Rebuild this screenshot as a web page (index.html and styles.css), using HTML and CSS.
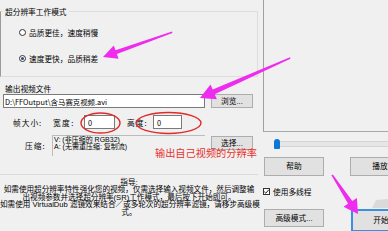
FILE: index.html
```html
<!DOCTYPE html>
<html lang="zh-CN">
<head>
<meta charset="utf-8">
<title>超分辨率</title>
<link rel="stylesheet" href="styles.css">
</head>
<body>
<div class="app">
  <div class="left">
    <div class="group">
      <div class="group-title">超分辨率工作模式</div>
      <div class="radio r1"><span class="rb"></span><span>品质更佳，速度稍慢</span></div>
      <div class="radio r2"><span class="rb on"></span><span>速度更快，品质稍差</span></div>
    </div>
    <div class="out-label">输出视频文件</div>
    <div class="file-row">
      <div class="field file">D:\FFOutput\含马赛克视频.avi</div>
      <div class="btn side">浏览...</div>
    </div>
    <div class="frame-row">
      <span class="lbl-frame">帧大小:</span>
      <span class="lbl-w">宽度:</span>
      <div class="field num w">0</div>
      <span class="lbl-h">高度:</span>
      <div class="field num h">0</div>
    </div>
    <div class="comp-row">
      <span class="lbl-comp">压缩:</span>
      <div class="comp-box">
        <div>V: (非压缩的 RGB32)</div>
        <div>A: (无需重压缩: 复制流)</div>
      </div>
      <div class="btn side pick">选择...</div>
    </div>
    <div class="guide">
      <div>指导:</div>
      <div>如需使用超分辨率特性强化您的视频，仅需选择输入视频文件，然后调整输</div>
      <div>出视频参数并选择超分辨率(SR)工作模式，最后按下开始即可。</div>
      <div>如需使用 VirtualDub 滤镜效果结合／或多轮次的超分辨率滤镜，请移步高级模</div>
      <div>式。</div>
    </div>
  </div>
  <div class="right">
    <div class="preview"></div>
    <div class="slider"><span class="thumb"></span><span class="track"></span></div>
    <div class="btn-row top">
      <div class="btn big">帮助</div>
      <div class="btn big">播放</div>
    </div>
    <div class="check">
      <span class="cb"><svg viewBox="0 0 7 7" width="7" height="7"><path d="M1.2 3.6 L2.8 5.2 L5.9 1.6" fill="none" stroke="#222" stroke-width="1"/></svg></span>
      <span>使用多线程</span>
    </div>
    <div class="btn-row bottom">
      <div class="btn big adv">高级模式...</div>
      <div class="btn big start">开始</div>
    </div>
  </div>
</div>
<svg class="marks" viewBox="0 0 388 231" width="388" height="231">
  <polygon points="372,208 376,200 388,199 388,208" fill="#dadada"/>
  <ellipse cx="100.5" cy="123" rx="19.5" ry="10" fill="none" stroke="#e02a2a" stroke-width="1.4"/>
  <ellipse cx="168.5" cy="123" rx="32.5" ry="10.5" fill="none" stroke="#e02a2a" stroke-width="1.4"/>
  <polygon points="172,31.4 115.5,50.3 113.8,45.6 103,57 118.6,58.8 116.9,54.1 172.4,33" fill="#ee2bee"/>
  <polygon points="290,57.2 212.7,89.6 210.5,84.6 200,98 216.9,99.2 214.7,94.2 290.4,58.8" fill="#ee2bee"/>
  <polygon points="331.4,175.3 348.1,203.8 343.5,206.8 358,214 356.9,198 352.3,201 332.8,174.6" fill="#ee2bee"/>
</svg>
<div class="note">输出自己视频的分辨率</div>
</body>
</html>
```
FILE: styles.css
```css
html, body {
  margin: 0;
  padding: 0;
}
body {
  width: 388px;
  height: 231px;
  overflow: hidden;
  position: relative;
  background: #f0f0f0;
  color: #000;
  font-family: "Noto Sans CJK SC", "Noto Sans", sans-serif;
  font-size: 7.7px;
  line-height: 9px;
}
.app {
  display: flex;
  height: 231px;
}
.left {
  width: 260px;
  flex: none;
  display: flex;
  flex-direction: column;
}
.group {
  margin: 11px 2px 0 0;
  height: 66px;
  box-sizing: border-box;
  border: 1px solid #dcdcdc;
  border-left-color: #9a9a9a;
  display: flex;
  flex-direction: column;
}
.group-title {
  width: max-content;
  margin: -5px 0 0 2px;
  padding: 0 2px;
  background: #f0f0f0;
  line-height: 9px;
}
.radio {
  display: flex;
  align-items: center;
  gap: 3px;
  height: 9px;
  margin-left: 18px;
}
.r1 { margin-top: 12px; }
.r2 { margin-top: 17px; }
.rb {
  width: 7px;
  height: 7px;
  box-sizing: border-box;
  border: 1px solid #333;
  border-radius: 50%;
  background: #fff;
  display: flex;
  align-items: center;
  justify-content: center;
}
.rb.on::after {
  content: "";
  width: 3px;
  height: 3px;
  border-radius: 50%;
  background: #1a4f8f;
}
.out-label {
  margin: 7px 0 0 5px;
  line-height: 9px;
}
.file-row {
  display: flex;
  margin-top: 1px;
}
.field {
  background: #fff;
  border: 1px solid #7a7a7a;
  box-sizing: border-box;
  display: flex;
  align-items: center;
  font-size: 7.4px;
  white-space: nowrap;
  overflow: hidden;
}
.file {
  margin-left: 3px;
  width: 202px;
  height: 14px;
  padding-left: 1px;
}
.btn {
  background: #e1e1e1;
  border: 1px solid #adadad;
  box-sizing: border-box;
  display: flex;
  align-items: center;
  justify-content: center;
  white-space: nowrap;
  flex: none;
  font-family: "Liberation Sans", "Noto Sans CJK SC", sans-serif;
}
.side {
  margin-left: 6px;
  width: 42px;
  height: 14px;
}
.frame-row {
  display: flex;
  align-items: center;
  height: 14px;
  margin-top: 7px;
}
.lbl-frame {
  margin-left: 13px;
  width: 40px;
  letter-spacing: 1px;
}
.lbl-w {
  width: 31px;
  letter-spacing: 1.4px;
}
.num {
  height: 14px;
  padding-left: 3px;
}
.w { width: 31px; }
.lbl-h {
  margin-left: 12px;
  width: 26px;
  letter-spacing: 1px;
}
.h { width: 29px; }
.comp-row {
  display: flex;
  margin-top: 6px;
}
.lbl-comp {
  margin-left: 25px;
  width: 27px;
  align-self: center;
  letter-spacing: 1px;
}
.comp-box {
  width: 153px;
  height: 21px;
  box-sizing: border-box;
  border-top: 1px solid #bcbcbc;
  border-left: 1px solid #bcbcbc;
  padding-left: 1px;
  font-family: "Liberation Sans", "Noto Sans CJK SC", sans-serif;
  font-size: 7px;
  line-height: 7px;
  white-space: nowrap;
}
.comp-box div {
  height: 7px;
}
.pick {
  margin-top: 1px;
}
.guide {
  margin: 18px 2px 0 0;
  border-top: 1px solid #dadada;
  padding-top: 3.5px;
  text-align: center;
  font-family: "Liberation Sans", "Noto Sans CJK SC", sans-serif;
  font-size: 7.6px;
  line-height: 7.6px;
  white-space: nowrap;
}
.guide div {
  height: 7.5px;
}
.right {
  flex: 1;
  margin-left: 3px;
  display: flex;
  flex-direction: column;
  min-width: 0;
  overflow: hidden;
}
.preview {
  height: 132px;
  box-sizing: border-box;
  border-left: 1px solid #a0a0a0;
  border-bottom: 1px solid #a8a8a8;
  flex: none;
}
.slider {
  display: flex;
  align-items: center;
  height: 10px;
  margin-top: 7px;
  padding-left: 11px;
}
.thumb {
  width: 6px;
  height: 10px;
  background: #0a78d4;
  border-radius: 3px 3px 1px 1px;
  flex: none;
}
.track {
  flex: 1;
  height: 4px;
  background: #e6e6e6;
  border-top: 1px solid #d4d4d4;
  border-bottom: 1px solid #d4d4d4;
}
.btn-row {
  display: flex;
  align-items: flex-start;
  gap: 26px;
  padding-left: 1px;
}
.btn-row.top { margin-top: 8px; }
.big {
  width: 60px;
  height: 19px;
}
.check {
  display: flex;
  align-items: center;
  gap: 3px;
  height: 9px;
  margin-top: 11px;
}
.cb {
  width: 7px;
  height: 7px;
  box-sizing: border-box;
  border: 1px solid #333;
  background: #fff;
  display: flex;
}
.cb svg { display: block; margin: -1px; }
.btn-row.bottom {
  margin-top: 13px;
  gap: 27px;
}
.adv { height: 18px; }
.start {
  height: 23px;
  border: 2px solid #3c8ede;
}
.marks {
  position: absolute;
  left: 0;
  top: 0;
  pointer-events: none;
}
.note {
  position: absolute;
  left: 155px;
  top: 148.5px;
  font-family: "Liberation Sans", "Noto Sans CJK SC", sans-serif;
  font-size: 10.2px;
  line-height: 10px;
  color: #e8322e;
  white-space: nowrap;
}
```
